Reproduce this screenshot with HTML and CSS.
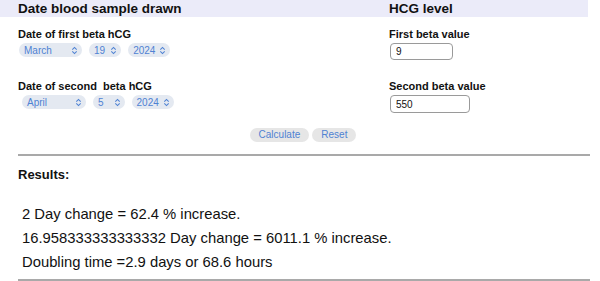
FILE: index.html
```html
<!DOCTYPE html>
<html lang="en">
<head>
    <meta charset="UTF-8">
    <meta name="viewport" content="width=device-width, initial-scale=1.0">
    <title>HCG Calculator</title>
    <link rel="stylesheet" href="styles.css">
</head>
<body>
    <form id="hcg-form">
        <div class="head-row">
            <div class="col-left">Date blood sample drawn</div>
            <div class="col-right">HCG level</div>
        </div>

        <div class="field-row">
            <div class="col-left">
                <label>Date of first beta hCG</label>
                <div class="date-group">
                    <span class="pill month">March<svg viewBox="0 0 8 10"><path d="M1.5 4 L4 1.5 L6.5 4 M1.5 6 L4 8.5 L6.5 6"/></svg></span>
                    <span class="pill day">19<svg viewBox="0 0 8 10"><path d="M1.5 4 L4 1.5 L6.5 4 M1.5 6 L4 8.5 L6.5 6"/></svg></span>
                    <span class="pill year">2024<svg viewBox="0 0 8 10"><path d="M1.5 4 L4 1.5 L6.5 4 M1.5 6 L4 8.5 L6.5 6"/></svg></span>
                </div>
            </div>
            <div class="col-right">
                <label for="beta1">First beta value</label>
                <input type="text" id="beta1" class="beta short" value="9">
            </div>
        </div>

        <div class="field-row second">
            <div class="col-left">
                <label>Date of second &nbsp;beta hCG</label>
                <div class="date-group">
                    <span class="pill month">April<svg viewBox="0 0 8 10"><path d="M1.5 4 L4 1.5 L6.5 4 M1.5 6 L4 8.5 L6.5 6"/></svg></span>
                    <span class="pill day">5<svg viewBox="0 0 8 10"><path d="M1.5 4 L4 1.5 L6.5 4 M1.5 6 L4 8.5 L6.5 6"/></svg></span>
                    <span class="pill year">2024<svg viewBox="0 0 8 10"><path d="M1.5 4 L4 1.5 L6.5 4 M1.5 6 L4 8.5 L6.5 6"/></svg></span>
                </div>
            </div>
            <div class="col-right">
                <label for="beta2">Second beta value</label>
                <input type="text" id="beta2" class="beta long" value="550">
            </div>
        </div>

        <div class="buttons">
            <button type="button">Calculate</button>
            <button type="reset">Reset</button>
        </div>
    </form>

    <hr>
    <h4>Results:</h4>
    <div class="results">
        <p>2 Day change = 62.4 % increase.</p>
        <p>16.958333333333332 Day change = 6011.1 % increase.</p>
        <p>Doubling time =2.9 days or 68.6 hours</p>
    </div>
    <hr>
</body>
</html>
```

FILE: styles.css
```css
body {
    font-family: "Liberation Sans", Arial, sans-serif;
    margin: 0;
    width: 590px;
    color: #111;
}
form {
    width: 588px;
}
.head-row {
    display: flex;
    height: 17px;
    background: #ebebf9;
    font-size: 13.5px;
    font-weight: bold;
    line-height: 17px;
}
.col-left {
    width: 371px;
    padding-left: 18px;
}
.col-right {
    flex: 1;
}
.field-row {
    display: flex;
    margin-top: 11px;
    height: 40px;
}
.field-row.second {
    margin-top: 12px;
}
label {
    display: block;
    font-size: 11px;
    font-weight: bold;
    line-height: 13px;
    margin-bottom: 2px;
}
.date-group {
    display: flex;
    gap: 7px;
    margin-left: 1px;
}
.second .date-group {
    margin-left: 4px;
}
.pill {
    display: flex;
    align-items: center;
    justify-content: space-between;
    height: 14px;
    padding: 0 4px 0 5px;
    border-radius: 7px;
    background: #e4e9f1;
    color: #4f82d3;
    font-size: 10px;
}
.pill svg {
    width: 7px;
    height: 9px;
    fill: none;
    stroke: #4f82d3;
    stroke-width: 1.2;
}
.pill.month {
    width: 54px;
}
.second .pill.month {
    width: 55px;
}
.pill.day {
    gap: 5px;
}
.second .pill.day {
    gap: 10px;
}
.pill.year {
    gap: 4px;
}
.beta {
    display: block;
    height: 17px;
    margin: 1px 0 0 1px;
    padding: 0 5px;
    box-sizing: border-box;
    border: 1px solid #9a9a9a;
    border-radius: 4px;
    font-family: inherit;
    font-size: 10px;
    color: #111;
}
.beta.short {
    width: 63px;
}
.beta.long {
    width: 80px;
    height: 18px;
}
.buttons {
    display: flex;
    justify-content: center;
    gap: 3px;
    margin-top: 8px;
    padding-left: 18px;
}
button {
    height: 14px;
    padding: 0 9px;
    border: none;
    border-radius: 7px;
    background: #e6e6e6;
    color: #4f82d3;
    font-family: inherit;
    font-size: 10px;
    line-height: 14px;
}
hr {
    margin: 12px 0 0 18px;
    width: 572px;
    border: none;
    border-top: 2px solid #a9a9a9;
}
h4 {
    margin: 11px 0 0 18px;
    font-size: 13px;
    line-height: 16px;
}
.results {
    margin: 19px 0 0 22px;
    font-size: 14.8px;
}
.results p {
    margin: 0;
    line-height: 24px;
}
.results + hr {
    margin-top: 5px;
}
```
